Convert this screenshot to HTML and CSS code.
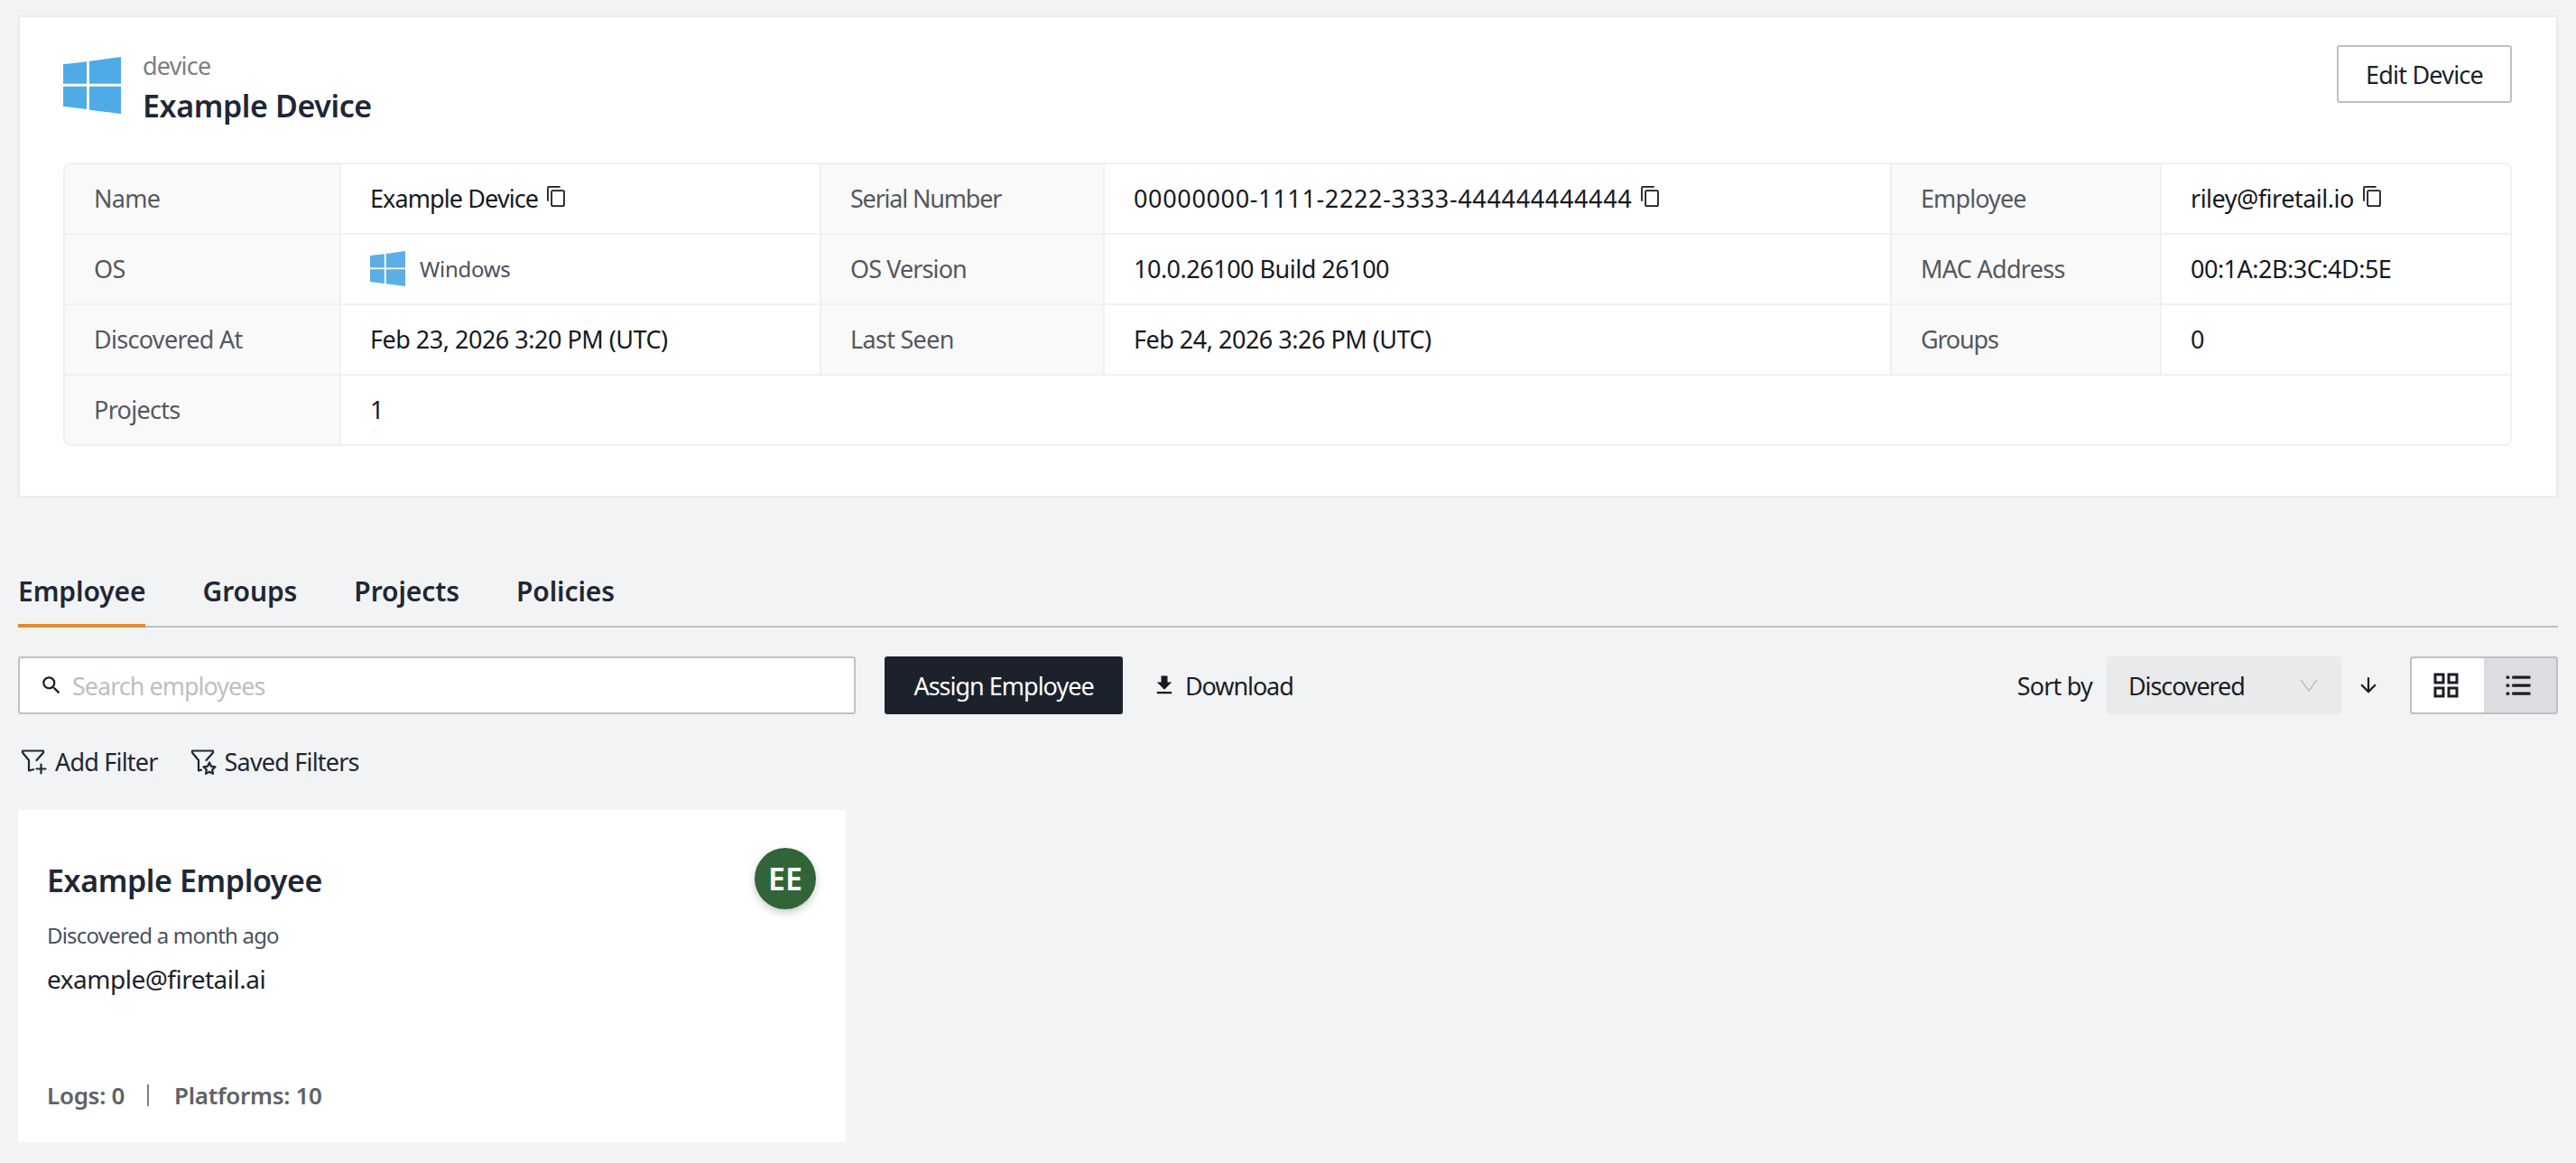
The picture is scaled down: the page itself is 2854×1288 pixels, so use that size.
FILE: index.html
```html
<!DOCTYPE html>
<html lang="en">
<head>
<meta charset="utf-8">
<title>Example Device</title>
<link rel="stylesheet" href="styles.css">
</head>
<body>
<svg class="defs" width="0" height="0" aria-hidden="true">
  <symbol id="win" viewBox="0 0 64 63.300" preserveAspectRatio="none"><path d="M0 8.300 26 5.300V30H0zM29 4.700 64 0V30H29zM0 33H26V58.300L0 55zM29 33H64V63.300L29 59z"/></symbol>
  <symbol id="copy" viewBox="0 0 24 24"><path d="M16 1H4c-1.100 0-2 .9-2 2v14h1.700V2.700H16V1zm3 4H8c-1.100 0-2 .9-2 2v14c0 1.100.9 2 2 2h11c1.100 0 2-.9 2-2V7c0-1.100-.9-2-2-2zm.3 16.300H7.700V6.700h11.600v14.600z"/></symbol>
</svg>
<section class="panel">
  <header class="panel-head">
    <div class="title-group">
      <svg class="win-large"><use href="#win"/></svg>
      <div>
        <div class="kind">device</div>
        <h1 class="title">Example Device</h1>
      </div>
    </div>
    <button class="btn-outline">Edit Device</button>
  </header>
  <div class="info">
    <div class="row">
      <div class="lab c1">Name</div>
      <div class="val c2"><span class="tight">Example Device</span><svg class="copy"><use href="#copy"/></svg></div>
      <div class="lab c3 tighter">Serial Number</div>
      <div class="val c4"><span class="serial">00000000-1111-2222-3333-444444444444</span><svg class="copy"><use href="#copy"/></svg></div>
      <div class="lab c5 tight">Employee</div>
      <div class="val c6">riley@firetail.io<svg class="copy"><use href="#copy"/></svg></div>
    </div>
    <div class="row">
      <div class="lab c1">OS</div>
      <div class="val c2"><svg class="win-small"><use href="#win"/></svg><span class="os-name">Windows</span></div>
      <div class="lab c3 tight">OS Version</div>
      <div class="val c4">10.0.26100 Build 26100</div>
      <div class="lab c5">MAC Address</div>
      <div class="val c6">00:1A:2B:3C:4D:5E</div>
    </div>
    <div class="row">
      <div class="lab c1">Discovered At</div>
      <div class="val c2">Feb 23, 2026 3:20 PM (UTC)</div>
      <div class="lab c3">Last Seen</div>
      <div class="val c4">Feb 24, 2026 3:26 PM (UTC)</div>
      <div class="lab c5 tighter">Groups</div>
      <div class="val c6">0</div>
    </div>
    <div class="row">
      <div class="lab c1">Projects</div>
      <div class="val grow">1</div>
    </div>
  </div>
</section>

<nav class="tabs">
  <a class="tab active">Employee</a>
  <a class="tab">Groups</a>
  <a class="tab">Projects</a>
  <a class="tab">Policies</a>
</nav>

<div class="toolbar">
  <label class="search">
    <svg class="ico-search" viewBox="0 0 24 24"><path d="M15.500 14h-.79l-.28-.27A6.470 6.470 0 0 0 16 9.500 6.500 6.500 0 1 0 9.500 16c1.610 0 3.090-.59 4.230-1.570l.27.28v.79l5 4.990L20.490 19l-4.990-5zm-6 0C7.010 14 5 11.990 5 9.500S7.010 5 9.500 5 14 7.010 14 9.500 11.990 14 9.500 14z"/></svg>
    <span class="placeholder">Search employees</span>
  </label>
  <button class="btn-dark">Assign Employee</button>
  <button class="btn-plain"><svg class="ico-dl" viewBox="0 0 24 24"><path d="M19 9h-4V3H9v6H5l7 7 7-7zM5 18v2h14v-2H5z"/></svg>Download</button>
  <div class="spacer"></div>
  <span class="sort-label">Sort by</span>
  <div class="select"><span>Discovered</span><svg class="chev" viewBox="0 0 20 14"><path d="M1 1l9 12 9-12" fill="none" stroke="currentColor" stroke-width="1.300"/></svg></div>
  <svg class="ico-arrow" viewBox="0 0 24 24"><path d="M20 12l-1.410-1.410L13 16.170V4h-2v12.170l-5.580-5.590L4 12l8 8 8-8z"/></svg>
  <div class="toggle">
    <span class="tg on"><svg class="ico-view" viewBox="0 0 24 24"><path d="M3 3v8h8V3H3zm6 6H5V5h4v4zm-6 4v8h8v-8H3zm6 6H5v-4h4v4zm4-16v8h8V3h-8zm6 6h-4V5h4v4zm-6 4v8h8v-8h-8zm6 6h-4v-4h4v4z"/></svg></span>
    <span class="tg"><svg class="ico-view" viewBox="0 0 24 24"><path d="M7.500 5h13.500v2.200H7.500zM7.500 11h13.500v2.200H7.500zM7.500 17h13.500v2.200H7.500z"/><circle cx="4.300" cy="6.100" r="1.300"/><circle cx="4.300" cy="12.100" r="1.300"/><circle cx="4.300" cy="18.100" r="1.300"/></svg></span>
  </div>
</div>

<div class="filters">
  <button class="filter"><svg class="ico-filter" viewBox="0 0 30 30" fill="none" stroke="currentColor" stroke-width="2.200" stroke-linejoin="round" stroke-linecap="round"><path d="M3 3.500h23v2L18.500 14M3 3.500v2L10 14v11.500l5-1.300"/><path d="M23.500 18.500v10M18.500 23.500h10"/></svg>Add Filter</button>
  <button class="filter"><svg class="ico-filter" viewBox="0 0 30 30" fill="none" stroke="currentColor" stroke-width="2.200" stroke-linejoin="round" stroke-linecap="round"><path d="M3 3.500h23v2L18.500 14M3 3.500v2L10 14v11.500l3-.9"/><path d="M22 16.500l2 4.200 4.500.6-3.300 3.100.8 4.500-4-2.200-4 2.200.8-4.500-3.300-3.100 4.500-.6z"/></svg>Saved Filters</button>
</div>

<article class="card">
  <div class="card-top">
    <h2 class="card-name">Example Employee</h2>
    <div class="avatar">EE</div>
  </div>
  <div class="card-sub">Discovered a month ago</div>
  <div class="card-mail">example@firetail.ai</div>
  <div class="card-stats"><span>Logs: 0</span><i class="sep"></i><span>Platforms: 10</span></div>
</article>
</body>
</html>
```
FILE: styles.css
```css
* { box-sizing: border-box; }
html, body { margin: 0; padding: 0; }
body {
  background: #f2f3f5;
  font-family: "Noto Sans", sans-serif;
  font-size: 27px;
  color: #1b222c;
  padding: 17px 20px 0;
  height: 1288px;
  overflow: hidden;
}
button { font: inherit; color: inherit; background: none; border: 0; padding: 0; letter-spacing: inherit; }
.defs { position: absolute; }
h1, h2 { margin: 0; }

.panel {
  height: 534px;
  background: #fff;
  border: 2px solid #eaebed;
  padding: 31px 49px 0 48px;
}
.panel-head { display: flex; justify-content: space-between; align-items: flex-start; height: 130px; }
.title-group { display: flex; align-items: flex-start; gap: 24px; }
.win-large { width: 64px; height: 63px; margin-top: 13px; fill: #4eabe6; }
.kind { line-height: 36px; color: #7b7f85; margin-top: 5px; letter-spacing: -.8px; }
.title { font-size: 34px; line-height: 46px; font-weight: 600; color: #1f2735; margin-top: 3px; letter-spacing: -.4px; }
.btn-outline {
  width: 194px; height: 64px;
  border: 2px solid #bfc0c2;
  border-radius: 3px;
  background: #fff;
  letter-spacing: -.8px;
}

.info {
  border: 2px solid #f0f0f1;
  border-radius: 8px;
  overflow: hidden;
  width: 2713px;
}
.row { display: flex; height: 78px; border-bottom: 2px solid #f0f0f1; }
.row:last-child { border-bottom: 0; height: 76px; }
.lab, .val { display: flex; align-items: center; padding: 0 0 2px 32px; }
.lab { background: #f9f9fa; color: #55585d; border-right: 2px solid #f0f0f1; letter-spacing: -.7px; }
.val { color: #16191f; letter-spacing: -.5px; }
.c2, .c4 { border-right: 2px solid #f0f0f1; }
.c1 { width: 306px; }
.c2 { width: 532px; }
.c3 { width: 314px; }
.c4 { width: 872px; }
.c5 { width: 299px; }
.c6, .grow { flex: 1; }
.tight { letter-spacing: -.9px; }
.tighter { letter-spacing: -1.2px; }
.serial { letter-spacing: .65px; }
.copy { width: 25px; height: 25px; margin: -3px 0 0 8px; fill: #16191f; }
.win-small { width: 39px; height: 39px; fill: #5caee6; margin-right: 16px; }
.os-name { font-size: 24px; color: #4a5160; letter-spacing: -.3px; }

.tabs {
  display: flex;
  gap: 63px;
  margin-top: 82px;
  height: 62px;
  border-bottom: 2px solid #bfc0c2;
}
.tab { font-size: 30px; font-weight: 600; line-height: 42px; color: #1f2735; height: 62px; padding-top: 1px; letter-spacing: -.1px; }
.tab.active { border-bottom: 4px solid #e58a2e; }

.toolbar { display: flex; align-items: center; height: 64px; margin-top: 32px; }
.search {
  display: flex; align-items: center;
  width: 928px; height: 64px;
  background: #fff;
  border: 2px solid #bfc0c2;
  border-radius: 3px;
  padding-left: 22px;
}
.ico-search { width: 26px; height: 26px; fill: #16191f; margin-right: 10px; }
.placeholder { color: #bdbfc2; letter-spacing: -1px; }
.btn-dark {
  width: 264px; height: 64px; margin-left: 32px;
  background: #1b222c; color: #fff; border-radius: 3px;
  letter-spacing: -1px;
}
.btn-plain { display: flex; align-items: center; margin-left: 32px; color: #1b1e24; letter-spacing: -1.1px; }
.ico-dl { width: 28px; height: 28px; fill: #16191f; margin-right: 9px; }
.spacer { flex: 1; }
.sort-label { color: #1b1e24; margin-right: 16px; letter-spacing: -.8px; }
.select {
  display: flex; align-items: center; justify-content: space-between;
  width: 260px; height: 64px;
  background: #e9eaec;
  border-radius: 3px;
  padding: 0 26px 0 24px;
  color: #1b1e24;
  letter-spacing: -1.100px;
}
.chev { width: 20px; height: 14px; color: #b8babd; }
.ico-arrow { width: 26px; height: 26px; margin: 0 33px 0 17px; fill: #16191f; }
.toggle { display: flex; width: 164px; height: 64px; border: 2px solid #bfc0c2; border-radius: 3px; background: #dcdde0; }
.tg { flex: 1; display: flex; align-items: center; justify-content: center; padding-right: 5px; }
.tg.on { background: #fff; border-radius: 3px 0 0 3px; }
.ico-view { width: 36px; height: 36px; fill: #1b1e24; }

.filters { display: flex; gap: 33px; margin-top: 34px; height: 36px; align-items: center; }
.filter { display: flex; align-items: center; gap: 9px; padding-left: 2px; color: #1f2735; letter-spacing: -.8px; }
.ico-filter { width: 30px; height: 30px; }

.card {
  width: 917px; height: 368px;
  margin-top: 36px;
  background: #fff;
  border-radius: 3px;
  padding: 42px 33px 0 32px;
}
.card-top { display: flex; justify-content: space-between; align-items: flex-start; height: 80px; }
.card-name { font-size: 34px; line-height: 46px; font-weight: 600; color: #1f2735; margin-top: 13px; letter-spacing: -.4px; }
.avatar {
  width: 68px; height: 68px;
  border-radius: 50%;
  background: #316539;
  color: #fff;
  font-size: 34px; font-weight: 600;
  display: flex; align-items: center; justify-content: center;
  box-shadow: 0 4px 10px rgba(0,0,0,.2);
}
.card-sub { font-size: 24px; line-height: 34px; color: #4a5160; letter-spacing: -.8px; }
.card-mail { font-size: 28px; line-height: 38px; color: #1b222c; margin-top: 12px; letter-spacing: -.5px; }
.card-stats { display: flex; align-items: center; margin-top: 92px; font-size: 26px; font-weight: 600; color: #606266; letter-spacing: -.3px; }
.sep { display: block; width: 2px; height: 24px; background: #7d7f83; margin: 0 28px 0 25px; }
```
